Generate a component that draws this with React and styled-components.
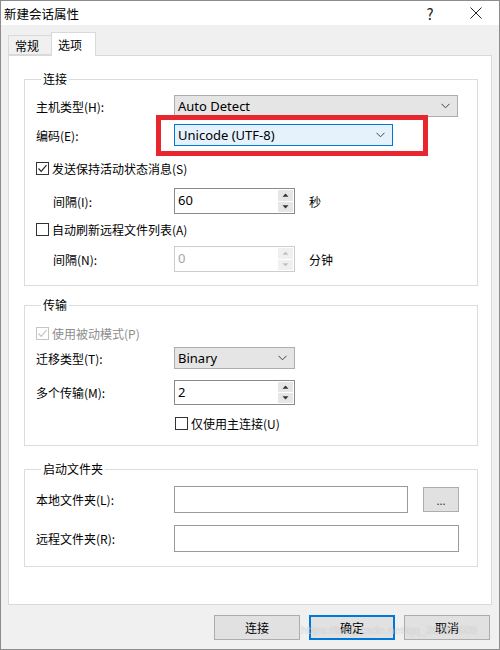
import React from "react";
import styled, { createGlobalStyle } from "styled-components";

const GlobalStyle = createGlobalStyle`
  html, body {
    margin: 0;
    padding: 0;
    background: #ffffff;
  }
  body {
    font-family: "Noto Sans CJK SC", "Noto Sans", sans-serif;
    font-size: 12px;
    color: #000;
  }
`;

const Window = styled.div`
  position: relative;
  width: 500px;
  height: 650px;
  box-sizing: border-box;
  border: 1px solid #8c8c8c;
  background: #f0f0f0;
  display: flex;
  flex-direction: column;
  overflow: hidden;
`;

const TitleBar = styled.div`
  height: 24px;
  flex-shrink: 0;
  background: #ffffff;
  display: flex;
  align-items: center;
  padding-left: 3px;
`;

const Title = styled.div`
  flex: 1;
  font-size: 12.5px;
`;

const TitleButton = styled.div`
  width: 46px;
  height: 24px;
  display: flex;
  align-items: center;
  justify-content: center;
  color: #222;
  font-size: 15px;
`;

const Body = styled.div`
  padding: 8px 7px 0 7px;
  display: flex;
  flex-direction: column;
`;

const TabStrip = styled.div`
  display: flex;
  align-items: flex-end;
  height: 22px;
`;

const Tab = styled.div`
  position: relative;
  z-index: ${(p) => (p.$active ? 2 : 1)};
  box-sizing: border-box;
  height: ${(p) => (p.$active ? "24px" : "20px")};
  margin-bottom: ${(p) => (p.$active ? "-1px" : "0")};
  margin-left: ${(p) => (p.$active ? "-1px" : "0")};
  width: ${(p) => p.$w}px;
  padding-left: 6px;
  display: flex;
  align-items: center;
  border: 1px solid #d9d9d9;
  border-bottom: ${(p) => (p.$active ? "none" : "1px solid #d9d9d9")};
  background: ${(p) => (p.$active ? "#ffffff" : "#f0f0f0")};
`;

const Panel = styled.div`
  box-sizing: border-box;
  height: 550px;
  background: #ffffff;
  border: 1px solid #d9d9d9;
  padding: 15px 13px 0 15px;
`;

const Group = styled.fieldset`
  margin: ${(p) => p.$mt || 0}px 0 0 0;
  min-width: 0;
  border: 1px solid #dcdcdc;
  padding: ${(p) => p.$pt}px 18px ${(p) => p.$pb}px 11px;
`;

const Legend = styled.legend`
  padding: 0 2px;
  margin-left: 5px;
  line-height: 16px;
  font-size: 12px;
`;

const Row = styled.div`
  position: relative;
  display: flex;
  align-items: center;
  height: ${(p) => p.$h}px;
  margin-top: ${(p) => p.$mt || 0}px;
  padding-left: ${(p) => p.$offset || 0}px;
`;

const Label = styled.div`
  width: ${(p) => 138 - (p.$indent || 0)}px;
  padding-left: ${(p) => p.$indent || 0}px;
  flex-shrink: 0;
  white-space: nowrap;
`;

const Combo = styled.div`
  position: relative;
  box-sizing: border-box;
  width: ${(p) => p.$w}px;
  height: 100%;
  display: flex;
  align-items: center;
  justify-content: space-between;
  padding: 0 7px 0 3px;
  background: ${(p) => (p.$focus ? "#e5f1fb" : "#e5e5e5")};
  border: 1px solid ${(p) => (p.$focus ? "#0078d7" : "#adadad")};
  font-family: "Noto Sans", "Noto Sans CJK SC", sans-serif;
  font-size: 13px;
`;

const Highlight = styled.div`
  position: absolute;
  left: -19px;
  top: -10px;
  width: 272px;
  height: 41px;
  box-sizing: border-box;
  border: 5px solid #e8262d;
  pointer-events: none;
`;

const Spinner = styled.div`
  box-sizing: border-box;
  width: 121px;
  height: 100%;
  display: flex;
  background: #ffffff;
  border: 1px solid ${(p) => (p.$disabled ? "#cccccc" : "#8a8a8a")};
  color: ${(p) => (p.$disabled ? "#a6a6a6" : "#000")};
`;

const SpinValue = styled.div`
  flex: 1;
  padding: 3px 0 0 3px;
  font-family: "Noto Sans", "Noto Sans CJK SC", sans-serif;
  font-size: 13px;
  line-height: 16px;
`;

const SpinButtons = styled.div`
  width: 15px;
  display: flex;
  flex-direction: column;
  gap: 1px;
  padding: 1px 1px 1px 0;
`;

const SpinButton = styled.div`
  flex: 1;
  display: flex;
  align-items: center;
  justify-content: center;
  background: ${(p) => (p.$disabled ? "#f0f0f0" : "#e6e6e6")};
`;

const Unit = styled.div`
  margin-left: 14px;
`;

const Box = styled.div`
  box-sizing: border-box;
  width: 13px;
  height: 13px;
  margin-right: 3px;
  border: 1px solid ${(p) => (p.$disabled ? "#c4c4c4" : "#333333")};
  background: #ffffff;
  display: flex;
  align-items: center;
  justify-content: center;
  flex-shrink: 0;
`;

const CheckText = styled.span`
  color: ${(p) => (p.$disabled ? "#8d8d8d" : "#000")};
`;

const TextInput = styled.div`
  box-sizing: border-box;
  width: ${(p) => p.$w}px;
  height: 100%;
  background: #ffffff;
  border: 1px solid #9a9a9a;
`;

const SmallButton = styled.div`
  box-sizing: border-box;
  width: 36px;
  height: 25px;
  margin-left: 15px;
  background: #e1e1e1;
  border: 1px solid #adadad;
  display: flex;
  align-items: center;
  justify-content: center;
  font-size: 11px;
  color: #333;
`;

const Footer = styled.div`
  display: flex;
  justify-content: flex-end;
  gap: 9px;
  padding: 10px 2px 0 0;
`;

const DialogButton = styled.div`
  box-sizing: border-box;
  width: 86px;
  height: 25px;
  display: flex;
  align-items: center;
  justify-content: center;
  background: #e1e1e1;
  border: 1px solid ${(p) => (p.$primary ? "#0078d7" : "#adadad")};
  box-shadow: ${(p) => (p.$primary ? "inset 0 0 0 1px #0078d7" : "none")};
`;

const Watermark = styled.div`
  position: absolute;
  left: 300px;
  top: 623px;
  font-family: "Liberation Sans", sans-serif;
  font-size: 11.5px;
  color: rgba(255, 255, 255, 0.55);
  text-shadow: 0 0 1px rgba(0, 0, 0, 0.22);
  white-space: nowrap;
  pointer-events: none;
`;

function Chevron() {
  return (
    <svg width="9" height="6" viewBox="0 0 9 6">
      <path d="M0.5 0.8 L4.5 4.8 L8.5 0.8" fill="none" stroke="#444" strokeWidth="1" />
    </svg>
  );
}

function Arrow({ up, disabled }) {
  return (
    <svg width="7" height="4" viewBox="0 0 7 4">
      <path
        d={up ? "M0.5 3.8 L3.5 0.5 L6.5 3.8 Z" : "M0.5 0.2 L3.5 3.5 L6.5 0.2 Z"}
        fill={disabled ? "#c2c2c2" : "#333"}
      />
    </svg>
  );
}

function Check({ disabled }) {
  return (
    <svg width="11" height="11" viewBox="0 0 11 11">
      <path
        d="M1.5 5.5 L4.2 8.3 L9.5 2.2"
        fill="none"
        stroke={disabled ? "#c4c4c4" : "#222"}
        strokeWidth="1.2"
      />
    </svg>
  );
}

function NumberBox({ value, disabled }) {
  return (
    <Spinner $disabled={disabled}>
      <SpinValue>{value}</SpinValue>
      <SpinButtons>
        <SpinButton $disabled={disabled}><Arrow up disabled={disabled} /></SpinButton>
        <SpinButton $disabled={disabled}><Arrow disabled={disabled} /></SpinButton>
      </SpinButtons>
    </Spinner>
  );
}

function CheckBox({ checked, disabled, children }) {
  return (
    <>
      <Box $disabled={disabled}>{checked && <Check disabled={disabled} />}</Box>
      <CheckText $disabled={disabled}>{children}</CheckText>
    </>
  );
}

export default function App() {
  return (
    <>
      <GlobalStyle />
      <Window>
        <TitleBar>
          <Title>新建会话属性</Title>
          <TitleButton>?</TitleButton>
          <TitleButton>
            <svg width="12" height="12" viewBox="0 0 12 12">
              <path d="M0.5 0.5 L11.5 11.5 M11.5 0.5 L0.5 11.5" stroke="#222" strokeWidth="1" />
            </svg>
          </TitleButton>
        </TitleBar>

        <Body>
          <TabStrip>
            <Tab $w={44}>常规</Tab>
            <Tab $w={45} $active>选项</Tab>
          </TabStrip>

          <Panel>
            <Group $pt={8} $pb={13}>
              <Legend>连接</Legend>
              <Row $h={22}>
                <Label>主机类型(H):</Label>
                <Combo $w={284}>Auto Detect<Chevron /></Combo>
              </Row>
              <Row $h={22} $mt={7}>
                <Label>编码(E):</Label>
                <Combo $w={219} $focus>
                  Unicode (UTF-8)<Chevron />
                  <Highlight />
                </Combo>
              </Row>
              <Row $h={20} $mt={12}>
                <CheckBox checked>发送保持活动状态消息(S)</CheckBox>
              </Row>
              <Row $h={26} $mt={10}>
                <Label $indent={17}>间隔(I):</Label>
                <NumberBox value="60" />
                <Unit>秒</Unit>
              </Row>
              <Row $h={20} $mt={5}>
                <CheckBox>自动刷新远程文件列表(A)</CheckBox>
              </Row>
              <Row $h={26} $mt={7}>
                <Label $indent={17}>间隔(N):</Label>
                <NumberBox value="0" disabled />
                <Unit>分钟</Unit>
              </Row>
            </Group>

            <Group $mt={11} $pt={10} $pb={12}>
              <Legend>传输</Legend>
              <Row $h={20}>
                <CheckBox checked disabled>使用被动模式(P)</CheckBox>
              </Row>
              <Row $h={22} $mt={4}>
                <Label>迁移类型(T):</Label>
                <Combo $w={121}>Binary<Chevron /></Combo>
              </Row>
              <Row $h={25} $mt={11}>
                <Label>多个传输(M):</Label>
                <NumberBox value="2" />
              </Row>
              <Row $h={20} $mt={8} $offset={139}>
                <CheckBox>仅使用主连接(U)</CheckBox>
              </Row>
            </Group>

            <Group $mt={15} $pt={9} $pb={14}>
              <Legend>启动文件夹</Legend>
              <Row $h={27}>
                <Label>本地文件夹(L):</Label>
                <TextInput $w={234} />
                <SmallButton>...</SmallButton>
              </Row>
              <Row $h={27} $mt={12}>
                <Label>远程文件夹(R):</Label>
                <TextInput $w={285} />
              </Row>
            </Group>
          </Panel>

          <Footer>
            <DialogButton>连接</DialogButton>
            <DialogButton $primary>确定</DialogButton>
            <DialogButton>取消</DialogButton>
          </Footer>
        </Body>

        <Watermark>https://blog.csdn.net/qq_39367609</Watermark>
      </Window>
    </>
  );
}
